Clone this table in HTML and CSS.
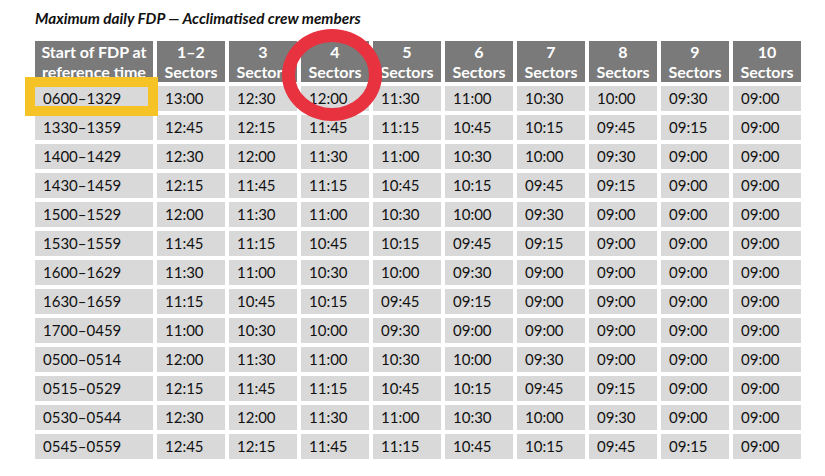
FILE: index.html
```html
<!DOCTYPE html>
<html>
<head>
<meta charset="utf-8">
<link rel="stylesheet" href="styles.css">
</head>
<body>
<div class="page">
  <h1 class="title">Maximum daily FDP — Acclimatised crew members</h1>
  <div class="wrap">
    <div class="grid">
      <div class="hd first">Start of FDP at<br>reference time</div>
      <div class="hd">1–2<br>Sectors</div>
      <div class="hd">3<br>Sectors</div>
      <div class="hd">4<br>Sectors</div>
      <div class="hd">5<br>Sectors</div>
      <div class="hd">6<br>Sectors</div>
      <div class="hd">7<br>Sectors</div>
      <div class="hd">8<br>Sectors</div>
      <div class="hd">9<br>Sectors</div>
      <div class="hd">10<br>Sectors</div>

      <div class="c">0600–1329</div><div class="c">13:00</div><div class="c">12:30</div><div class="c">12:00</div><div class="c">11:30</div><div class="c">11:00</div><div class="c">10:30</div><div class="c">10:00</div><div class="c">09:30</div><div class="c">09:00</div>
      <div class="c">1330–1359</div><div class="c">12:45</div><div class="c">12:15</div><div class="c">11:45</div><div class="c">11:15</div><div class="c">10:45</div><div class="c">10:15</div><div class="c">09:45</div><div class="c">09:15</div><div class="c">09:00</div>
      <div class="c">1400–1429</div><div class="c">12:30</div><div class="c">12:00</div><div class="c">11:30</div><div class="c">11:00</div><div class="c">10:30</div><div class="c">10:00</div><div class="c">09:30</div><div class="c">09:00</div><div class="c">09:00</div>
      <div class="c">1430–1459</div><div class="c">12:15</div><div class="c">11:45</div><div class="c">11:15</div><div class="c">10:45</div><div class="c">10:15</div><div class="c">09:45</div><div class="c">09:15</div><div class="c">09:00</div><div class="c">09:00</div>
      <div class="c">1500–1529</div><div class="c">12:00</div><div class="c">11:30</div><div class="c">11:00</div><div class="c">10:30</div><div class="c">10:00</div><div class="c">09:30</div><div class="c">09:00</div><div class="c">09:00</div><div class="c">09:00</div>
      <div class="c">1530–1559</div><div class="c">11:45</div><div class="c">11:15</div><div class="c">10:45</div><div class="c">10:15</div><div class="c">09:45</div><div class="c">09:15</div><div class="c">09:00</div><div class="c">09:00</div><div class="c">09:00</div>
      <div class="c">1600–1629</div><div class="c">11:30</div><div class="c">11:00</div><div class="c">10:30</div><div class="c">10:00</div><div class="c">09:30</div><div class="c">09:00</div><div class="c">09:00</div><div class="c">09:00</div><div class="c">09:00</div>
      <div class="c">1630–1659</div><div class="c">11:15</div><div class="c">10:45</div><div class="c">10:15</div><div class="c">09:45</div><div class="c">09:15</div><div class="c">09:00</div><div class="c">09:00</div><div class="c">09:00</div><div class="c">09:00</div>
      <div class="c">1700–0459</div><div class="c">11:00</div><div class="c">10:30</div><div class="c">10:00</div><div class="c">09:30</div><div class="c">09:00</div><div class="c">09:00</div><div class="c">09:00</div><div class="c">09:00</div><div class="c">09:00</div>
      <div class="c">0500–0514</div><div class="c">12:00</div><div class="c">11:30</div><div class="c">11:00</div><div class="c">10:30</div><div class="c">10:00</div><div class="c">09:30</div><div class="c">09:00</div><div class="c">09:00</div><div class="c">09:00</div>
      <div class="c">0515–0529</div><div class="c">12:15</div><div class="c">11:45</div><div class="c">11:15</div><div class="c">10:45</div><div class="c">10:15</div><div class="c">09:45</div><div class="c">09:15</div><div class="c">09:00</div><div class="c">09:00</div>
      <div class="c">0530–0544</div><div class="c">12:30</div><div class="c">12:00</div><div class="c">11:30</div><div class="c">11:00</div><div class="c">10:30</div><div class="c">10:00</div><div class="c">09:30</div><div class="c">09:00</div><div class="c">09:00</div>
      <div class="c">0545–0559</div><div class="c">12:45</div><div class="c">12:15</div><div class="c">11:45</div><div class="c">11:15</div><div class="c">10:45</div><div class="c">10:15</div><div class="c">09:45</div><div class="c">09:15</div><div class="c">09:00</div>
    </div>
    <div class="hl-box"></div>
    <div class="hl-ring"></div>
  </div>
</div>
</body>
</html>
```

FILE: styles.css
```css
html, body {
  margin: 0;
  padding: 0;
  background: #ffffff;
}

.page {
  padding: 8px 0 0 35px;
  font-family: Lato, "Open Sans", "DejaVu Sans", sans-serif;
}

.title {
  margin: 0 0 13px 0;
  font-size: 15.3px;
  line-height: 20px;
  font-weight: 700;
  font-style: italic;
  color: #111111;
}

.wrap {
  position: relative;
  width: 766px;
}

.grid {
  display: grid;
  grid-template-columns: 118px repeat(9, 68px);
  grid-template-rows: 41px;
  grid-auto-rows: 25px;
  gap: 4px 4px;
}

.hd {
  background: #7a7a7a;
  color: #ffffff;
  font-size: 16px;
  font-weight: 700;
  line-height: 20px;
  text-align: center;
  display: flex;
  align-items: center;
  justify-content: center;
}

.c {
  background: #d9d9d9;
  color: #111111;
  font-size: 15px;
  line-height: 25px;
  padding-left: 8px;
}

.hl-box {
  position: absolute;
  left: -10px;
  top: 36px;
  width: 113px;
  height: 19px;
  border: 10px solid #f6c326;
}

.hl-ring {
  position: absolute;
  left: 247px;
  top: -12px;
  width: 74px;
  height: 66px;
  border: 13px solid #e8323f;
  border-radius: 50%;
}
```
